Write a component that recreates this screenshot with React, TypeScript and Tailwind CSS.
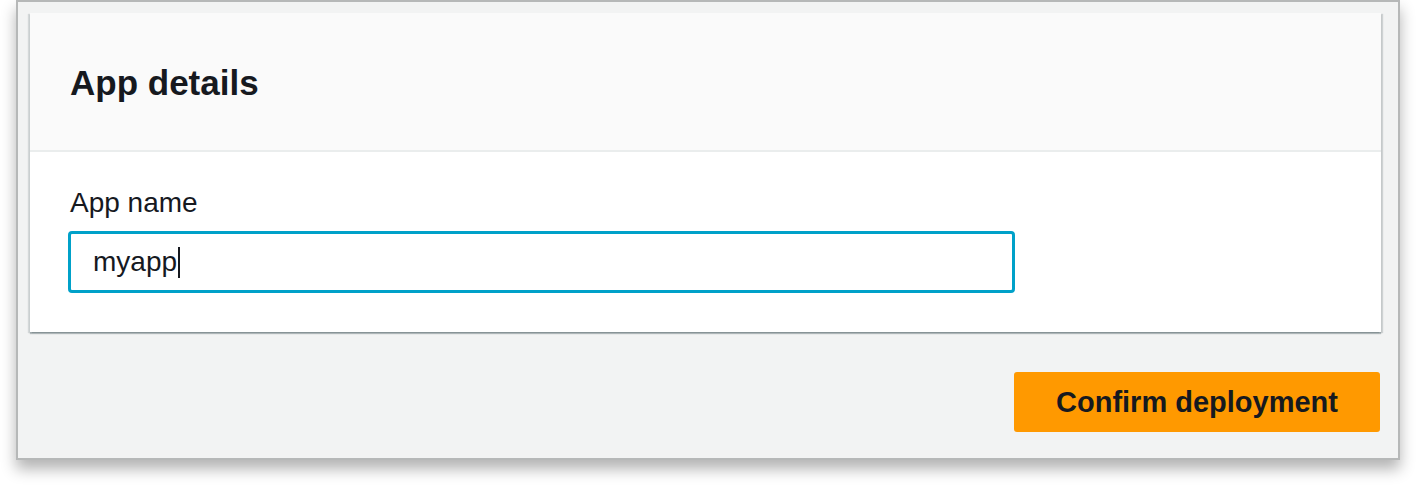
export default function App() {
  return (
    <div className="h-[492px] w-[1416px] bg-white font-['Liberation_Sans',Arial,sans-serif] text-[#16191f]">
      <div className="ml-[16px] flex h-[460px] w-[1384px] flex-col border-2 border-[#b6b8b8] bg-[#f2f3f3] shadow-[0_9px_14px_rgba(0,0,0,0.3)]">
        {/* card */}
        <div className="ml-[12px] mt-[11px] w-[1351px] bg-white shadow-[0_2px_1px_rgba(0,28,36,0.25),2px_1px_1px_rgba(0,28,36,0.15),-2px_1px_1px_rgba(0,28,36,0.12)]">
          <div className="h-[139px] border-b-2 border-[#eaeded] bg-[#fafafa] pl-[40px] pt-[50px]">
            <h2 className="text-[35px] font-bold leading-[40px]">App details</h2>
          </div>
          <div className="pb-[39px] pl-[38px] pt-[35px]">
            <label className="block pl-[2px] text-[28px] leading-[32px]">App name</label>
            <div className="mt-[12px] flex h-[62px] w-[947px] items-center rounded-[4px] border-[3px] border-[#00a1c9] pl-[22px]">
              <span className="text-[28px] leading-[32px]">myapp</span>
              <span className="ml-[1px] h-[31px] w-[2px] bg-[#16191f]" />
            </div>
          </div>
        </div>
        <div className="mr-[18px] mt-[40px] flex justify-end">
          <button
            type="button"
            className="h-[60px] w-[366px] rounded-[3px] bg-[#ff9900] text-[29px] font-bold leading-[32px] text-[#16191f]"
          >
            Confirm deployment
          </button>
        </div>
      </div>
    </div>
  );
}
